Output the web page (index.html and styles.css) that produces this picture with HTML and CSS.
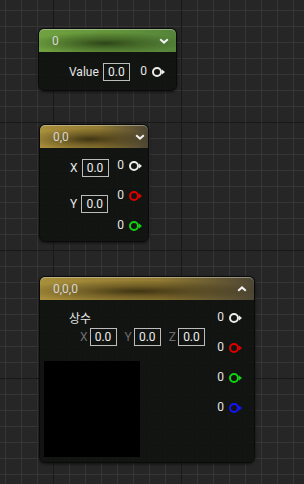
FILE: index.html
```html
<!DOCTYPE html>
<html lang="en">
<head>
    <meta charset="UTF-8">
    <meta name="viewport" content="width=device-width, initial-scale=1.0">
    <title>Constant Nodes</title>
    <link rel="stylesheet" href="styles.css">
</head>
<body>
    <div class="graph">
        <!-- scalar constant -->
        <div class="node node-scalar">
            <div class="node-head head-green">
                <span class="node-title">0</span>
                <svg class="chevron" viewBox="0 0 10 6"><polyline points="1.2,1.2 5,4.6 8.8,1.2"/></svg>
            </div>
            <div class="node-body body-center">
                <div class="inputs">
                    <div class="field">
                        <span class="field-label">Value</span>
                        <span class="value-box">0.0</span>
                    </div>
                </div>
                <div class="outputs">
                    <div class="pin pin-white">
                        <span class="pin-value">0</span>
                        <svg class="pin-icon" viewBox="0 0 14 10"><circle cx="5" cy="5" r="4"/><polygon points="10,2.6 13,5 10,7.4"/></svg>
                    </div>
                </div>
            </div>
        </div>

        <!-- 2 vector constant -->
        <div class="node node-vec2">
            <div class="node-head head-gold">
                <span class="node-title">0,0</span>
                <svg class="chevron" viewBox="0 0 10 6"><polyline points="1.2,1.2 5,4.6 8.8,1.2"/></svg>
            </div>
            <div class="node-body">
                <div class="inputs inputs-stack">
                    <div class="field">
                        <span class="field-label">X</span>
                        <span class="value-box">0.0</span>
                    </div>
                    <div class="field">
                        <span class="field-label">Y</span>
                        <span class="value-box">0.0</span>
                    </div>
                </div>
                <div class="outputs">
                    <div class="pin pin-white">
                        <span class="pin-value">0</span>
                        <svg class="pin-icon" viewBox="0 0 14 10"><circle cx="5" cy="5" r="4"/><polygon points="10,2.6 13,5 10,7.4"/></svg>
                    </div>
                    <div class="pin pin-red">
                        <span class="pin-value">0</span>
                        <svg class="pin-icon" viewBox="0 0 14 10"><circle cx="5" cy="5" r="4"/><polygon points="10,2.6 13,5 10,7.4"/></svg>
                    </div>
                    <div class="pin pin-green">
                        <span class="pin-value">0</span>
                        <svg class="pin-icon" viewBox="0 0 14 10"><circle cx="5" cy="5" r="4"/><polygon points="10,2.6 13,5 10,7.4"/></svg>
                    </div>
                </div>
            </div>
        </div>

        <!-- 3 vector constant -->
        <div class="node node-vec3">
            <div class="node-head head-gold">
                <span class="node-title">0,0,0</span>
                <svg class="chevron" viewBox="0 0 10 6"><polyline points="1.2,4.8 5,1.4 8.8,4.8"/></svg>
            </div>
            <div class="node-body">
                <div class="inputs">
                    <div class="const-label">상수</div>
                    <div class="xyz-row">
                        <span class="axis">X</span><span class="value-box">0.0</span>
                        <span class="axis">Y</span><span class="value-box">0.0</span>
                        <span class="axis">Z</span><span class="value-box">0.0</span>
                    </div>
                    <div class="preview"></div>
                </div>
                <div class="outputs">
                    <div class="pin pin-white">
                        <span class="pin-value">0</span>
                        <svg class="pin-icon" viewBox="0 0 14 10"><circle cx="5" cy="5" r="4"/><polygon points="10,2.6 13,5 10,7.4"/></svg>
                    </div>
                    <div class="pin pin-red">
                        <span class="pin-value">0</span>
                        <svg class="pin-icon" viewBox="0 0 14 10"><circle cx="5" cy="5" r="4"/><polygon points="10,2.6 13,5 10,7.4"/></svg>
                    </div>
                    <div class="pin pin-green">
                        <span class="pin-value">0</span>
                        <svg class="pin-icon" viewBox="0 0 14 10"><circle cx="5" cy="5" r="4"/><polygon points="10,2.6 13,5 10,7.4"/></svg>
                    </div>
                    <div class="pin pin-blue">
                        <span class="pin-value">0</span>
                        <svg class="pin-icon" viewBox="0 0 14 10"><circle cx="5" cy="5" r="4"/><polygon points="10,2.6 13,5 10,7.4"/></svg>
                    </div>
                </div>
            </div>
        </div>
    </div>
</body>
</html>
```

FILE: styles.css
```css
html, body {
    margin: 0;
    height: 100%;
}
body {
    font-family: Roboto, "Noto Sans CJK KR", sans-serif;
    font-size: 12px;
    color: #e2e2e2;
    background-color: #262626;
    background-image:
        linear-gradient(to right, #191919 1px, transparent 1px),
        linear-gradient(to bottom, #191919 1px, transparent 1px),
        linear-gradient(to right, #353535 1px, transparent 1px),
        linear-gradient(to bottom, #353535 1px, transparent 1px);
    background-size: 128px 128px, 128px 128px, 16px 16px, 16px 16px;
    background-position: 53px 0, 0 122px, 5px 0, 0 10px;
    overflow: hidden;
}
.graph {
    position: relative;
    width: 304px;
    height: 484px;
}

/* nodes sit on a free canvas */
.node {
    position: absolute;
    box-sizing: border-box;
    border: 1px solid #0a0a0a;
    border-radius: 6px;
    background-color: rgba(16, 18, 16, 0.88);
    box-shadow: 0 1px 3px rgba(0, 0, 0, 0.6);
}
.node-scalar {
    left: 38px;
    top: 28px;
    width: 139px;
}
.node-vec2 {
    left: 39px;
    top: 124px;
    width: 110px;
}
.node-vec3 {
    left: 39px;
    top: 276px;
    width: 216px;
}

.node-head {
    height: 23px;
    display: flex;
    align-items: center;
    justify-content: space-between;
    padding: 0 7px 0 13px;
    border-radius: 5px 5px 0 0;
    box-shadow: inset 0 1px 0 rgba(220, 220, 220, 0.45);
}
.node-vec2 .node-head {
    padding-right: 3px;
}
.head-green {
    background:
        radial-gradient(ellipse 58% 48% at 48% 62%, rgba(22, 36, 10, 0.7), rgba(22, 36, 10, 0.35) 45%, rgba(22, 36, 10, 0) 100%),
        linear-gradient(to right, #70a240 0%, #62933a 60%, #55843a 100%);
}
.head-gold {
    background:
        radial-gradient(ellipse 58% 48% at 46% 62%, rgba(34, 27, 8, 0.75), rgba(34, 27, 8, 0.35) 45%, rgba(34, 27, 8, 0) 100%),
        linear-gradient(to right, #a88f3b 0%, #937b32 55%, #4d4633 100%);
}
.node-title {
    color: #d6d6d6;
    font-size: 12px;
}
.chevron {
    width: 10px;
    height: 6px;
    fill: none;
    stroke: #f2f2f2;
    stroke-width: 2;
}

.node-body {
    display: flex;
    justify-content: space-between;
    align-items: flex-start;
    padding: 0 5px 7px 30px;
}
.body-center {
    align-items: center;
    padding: 11px 10px 9px 30px;
}
.node-vec3 .node-body {
    padding: 0 11px 5px 4px;
}

.inputs-stack {
    display: flex;
    flex-direction: column;
    gap: 18px;
    padding-top: 11px;
}
.field {
    display: flex;
    align-items: center;
    gap: 4px;
    height: 18px;
}
.field-label {
    color: #e6e6e6;
}
.value-box {
    box-sizing: border-box;
    width: 27px;
    height: 18px;
    border: 1px solid #bcbcbc;
    display: flex;
    align-items: center;
    justify-content: center;
    color: #eeeeee;
}

.outputs {
    display: flex;
    flex-direction: column;
    gap: 14px;
    padding-top: 10px;
}
.body-center .outputs {
    padding-top: 0;
}
.pin {
    display: flex;
    align-items: center;
    gap: 5px;
    height: 16px;
}
.pin-value {
    color: #e6e6e6;
    margin-top: -2px;
}
.pin-icon {
    width: 14px;
    height: 10px;
    fill: none;
    stroke: currentColor;
    stroke-width: 2;
}
.pin-icon polygon {
    fill: currentColor;
    stroke: none;
}
.pin-white { color: #ececec; }
.pin-red { color: #e00000; }
.pin-green { color: #12d212; }
.pin-blue { color: #1414ff; }

.const-label {
    margin: 11px 0 0 25px;
    line-height: 16px;
    color: #e6e6e6;
}
.xyz-row {
    display: flex;
    align-items: center;
    margin: 1px 0 0 36px;
    height: 18px;
}
.axis {
    color: #6c6c6c;
    margin-right: 2px;
}
.xyz-row .value-box {
    margin-right: 8px;
}
.preview {
    width: 96px;
    height: 96px;
    margin-top: 15px;
    background-color: #000;
}
```
